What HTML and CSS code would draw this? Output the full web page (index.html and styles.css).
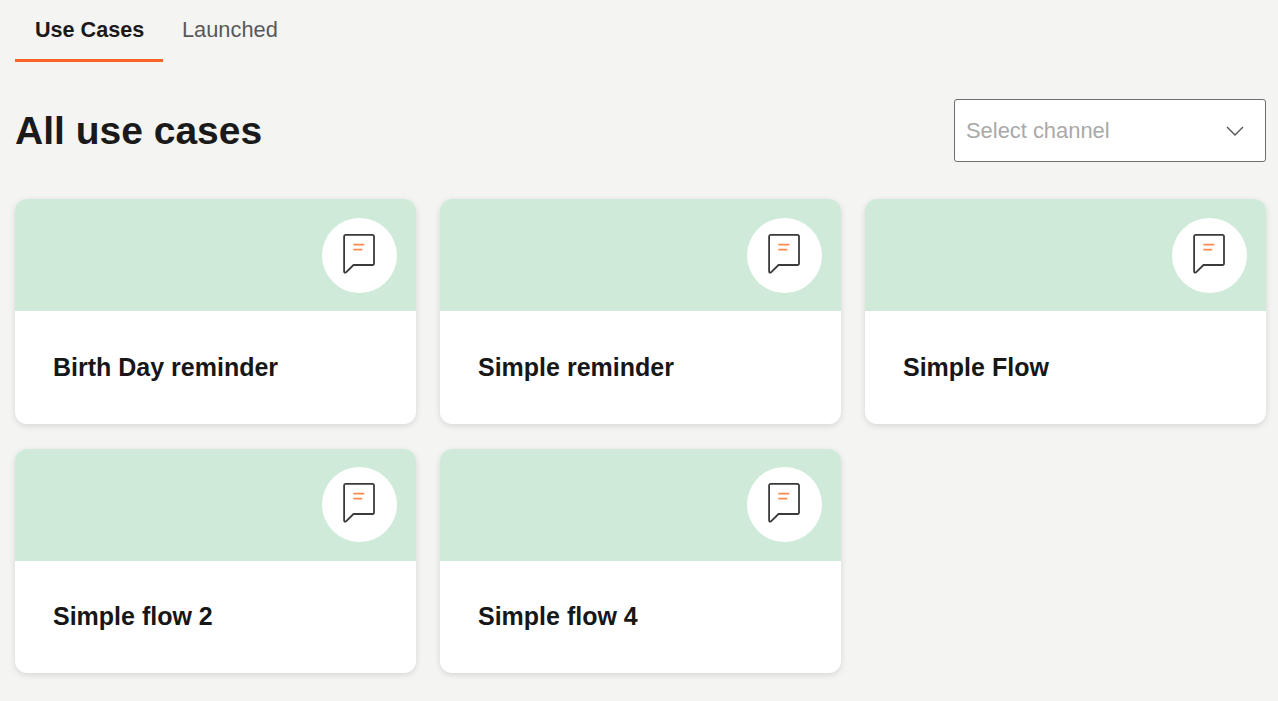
FILE: index.html
```html
<!DOCTYPE html>
<html lang="en">
<head>
    <meta charset="UTF-8">
    <meta name="viewport" content="width=device-width, initial-scale=1.0">
    <title>Use Cases</title>
    <link rel="stylesheet" href="styles.css">
</head>
<body>
    <nav class="tabs">
        <a href="#" class="tab tab-active">Use Cases</a>
        <a href="#" class="tab">Launched</a>
    </nav>

    <header class="page-header">
        <h1>All use cases</h1>
        <div class="channel-select">
            <span>Select channel</span>
            <svg class="chevron" width="18" height="10" viewBox="0 0 18 10">
                <path d="M1 1l8 8 8-8" fill="none" stroke="#555" stroke-width="1.4"/>
            </svg>
        </div>
    </header>

    <main class="card-grid">
        <div class="card">
            <div class="card-banner">
                <div class="card-badge">
                    <svg width="33" height="43" viewBox="0 0 33 43">
                        <path d="M2.5 .9H29.500a1.500 1.500 0 0 1 1.500 1.500V29.500a1.500 1.500 0 0 1-1.500 1.500H10.500L3 38.300Q1.100 39.500 1.100 37.300V2.400A1.500 1.500 0 0 1 2.500 .9z" fill="none" stroke="#3a3a3a" stroke-width="1.800" stroke-linejoin="round"/>
                        <path d="M10.300 10.700h11M10.300 15.700h9" stroke="#ff8a50" stroke-width="1.800"/>
                    </svg>
                </div>
            </div>
            <h2>Birth Day reminder</h2>
        </div>
        <div class="card">
            <div class="card-banner">
                <div class="card-badge">
                    <svg width="33" height="43" viewBox="0 0 33 43">
                        <path d="M2.5 .9H29.500a1.500 1.500 0 0 1 1.500 1.500V29.500a1.500 1.500 0 0 1-1.500 1.500H10.500L3 38.300Q1.100 39.500 1.100 37.300V2.400A1.500 1.500 0 0 1 2.500 .9z" fill="none" stroke="#3a3a3a" stroke-width="1.800" stroke-linejoin="round"/>
                        <path d="M10.300 10.700h11M10.300 15.700h9" stroke="#ff8a50" stroke-width="1.800"/>
                    </svg>
                </div>
            </div>
            <h2>Simple reminder</h2>
        </div>
        <div class="card">
            <div class="card-banner">
                <div class="card-badge">
                    <svg width="33" height="43" viewBox="0 0 33 43">
                        <path d="M2.5 .9H29.500a1.500 1.500 0 0 1 1.500 1.500V29.500a1.500 1.500 0 0 1-1.500 1.500H10.500L3 38.300Q1.100 39.500 1.100 37.300V2.400A1.500 1.500 0 0 1 2.500 .9z" fill="none" stroke="#3a3a3a" stroke-width="1.800" stroke-linejoin="round"/>
                        <path d="M10.300 10.700h11M10.300 15.700h9" stroke="#ff8a50" stroke-width="1.800"/>
                    </svg>
                </div>
            </div>
            <h2>Simple Flow</h2>
        </div>
        <div class="card">
            <div class="card-banner">
                <div class="card-badge">
                    <svg width="33" height="43" viewBox="0 0 33 43">
                        <path d="M2.5 .9H29.500a1.500 1.500 0 0 1 1.500 1.500V29.500a1.500 1.500 0 0 1-1.500 1.500H10.500L3 38.300Q1.100 39.500 1.100 37.300V2.400A1.500 1.500 0 0 1 2.500 .9z" fill="none" stroke="#3a3a3a" stroke-width="1.800" stroke-linejoin="round"/>
                        <path d="M10.300 10.700h11M10.300 15.700h9" stroke="#ff8a50" stroke-width="1.800"/>
                    </svg>
                </div>
            </div>
            <h2>Simple flow 2</h2>
        </div>
        <div class="card">
            <div class="card-banner">
                <div class="card-badge">
                    <svg width="33" height="43" viewBox="0 0 33 43">
                        <path d="M2.5 .9H29.500a1.500 1.500 0 0 1 1.500 1.500V29.500a1.500 1.500 0 0 1-1.500 1.500H10.500L3 38.300Q1.100 39.500 1.100 37.300V2.400A1.500 1.500 0 0 1 2.500 .9z" fill="none" stroke="#3a3a3a" stroke-width="1.800" stroke-linejoin="round"/>
                        <path d="M10.300 10.700h11M10.300 15.700h9" stroke="#ff8a50" stroke-width="1.800"/>
                    </svg>
                </div>
            </div>
            <h2>Simple flow 4</h2>
        </div>
    </main>
</body>
</html>
```

FILE: styles.css
```css
* {
    margin: 0;
    padding: 0;
    box-sizing: border-box;
    font-family: 'Liberation Sans', Arial, sans-serif;
}

body {
    background: #f4f4f2;
    color: #1a1a1a;
    padding: 0 12px 0 15px;
    height: 701px;
    overflow: hidden;
}

/* Tabs */
.tabs {
    display: flex;
    height: 62px;
}

.tab {
    padding: 18px 19px 0 20px;
    font-size: 21.8px;
    line-height: 24px;
    color: #58585a;
    text-decoration: none;
}

.tab-active {
    width: 148px;
    font-size: 21.6px;
    color: #1a1a1a;
    font-weight: 700;
    border-bottom: 3px solid #fb6228;
    white-space: nowrap;
}

.tab-active + .tab {
    padding-left: 19px;
}

/* Header */
.page-header {
    display: flex;
    justify-content: space-between;
    align-items: center;
    margin-top: 37px;
    height: 63px;
}

.page-header h1 {
    font-size: 39px;
    font-weight: 700;
    line-height: 62px;
}

.channel-select {
    width: 312px;
    height: 63px;
    display: flex;
    justify-content: space-between;
    align-items: center;
    padding: 0 21.5px 0 11px;
    background: #fff;
    border: 1px solid #6e6e6e;
    border-radius: 3px;
    font-size: 21.9px;
    color: #a9a9a9;
}

/* Cards */
.card-grid {
    display: grid;
    grid-template-columns: repeat(3, 401px);
    column-gap: 24px;
    row-gap: 25px;
    margin-top: 37px;
}

.card {
    height: 224.5px;
    background: #fff;
    border-radius: 12px;
    overflow: hidden;
    box-shadow: 0 2px 6px rgba(0, 0, 0, 0.12);
}

.card-banner {
    height: 112px;
    background: #cfead9;
    display: flex;
    justify-content: flex-end;
    padding: 18.9px 19px 0 0;
}

.card-badge {
    width: 75px;
    height: 75px;
    border-radius: 50%;
    background: #fff;
    display: flex;
    align-items: center;
    justify-content: center;
}

.card h2 {
    font-size: 25px;
    font-weight: 700;
    line-height: 30px;
    padding: 40.9px 38px 0;
    color: #171717;
}
```
